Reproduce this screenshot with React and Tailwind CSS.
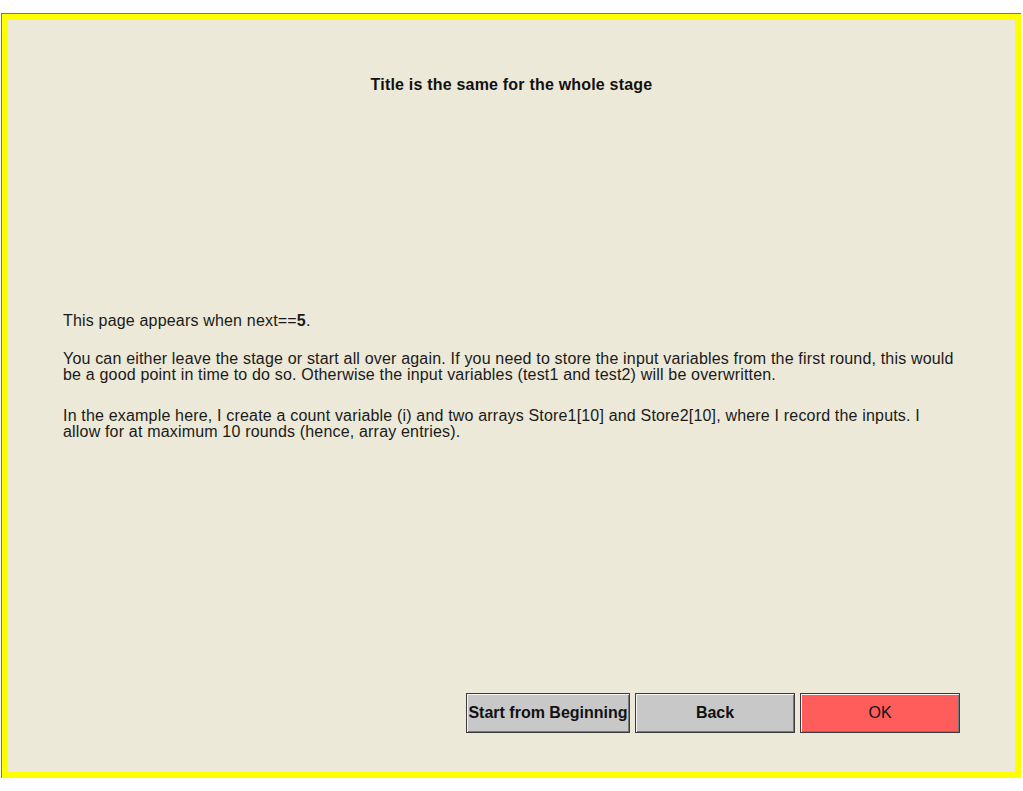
import React from "react";

export default function App() {
  const btn =
    "h-[40px] border border-[#3a3a3a] shadow-[inset_1px_1px_0_#f4f4f4,inset_-1px_-1px_0_#7a7a7a] text-[16px] leading-[16px] text-[#111] flex items-center justify-center whitespace-nowrap";

  return (
    <div className="w-[1023px] h-[791px] bg-white pt-[13px] pl-[1px] font-['Liberation_Sans',Arial,sans-serif]">
      {/* outer frame */}
      <div className="w-[1020px] h-[765px] border-t border-l border-[#7a7868]">
        <div className="w-full h-full border-[6px] border-[#ffff00] bg-[#ece9d8] flex flex-col">
          {/* title */}
          <h1 className="pt-[57px] text-center text-[16px] leading-[16px] tracking-[0.2px] font-bold text-[#111]">
            Title is the same for the whole stage
          </h1>

          {/* body text */}
          <div className="mt-[220px] pl-[55px] pr-[20px] text-[16px] leading-[16px] tracking-[0.18px] text-[#1a1a1a]">
            <p>
              This page appears when next==<b>5</b>.
            </p>
            <p className="mt-[22px]">
              You can either leave the stage or start all over again. If you need to store the input variables from the first round, this would
              <br />
              be a good point in time to do so. Otherwise the input variables (test1 and test2) will be overwritten.
            </p>
            <p className="mt-[25px]">
              In the example here, I create a count variable (i) and two arrays Store1[10] and Store2[10], where I record the inputs. I
              <br />
              allow for at maximum 10 rounds (hence, array entries).
            </p>
          </div>

          {/* buttons */}
          <div className="mt-auto mb-[39px] pr-[55px] flex justify-end gap-[5px]">
            <button className={`${btn} w-[164px] bg-[#c8c8c8] font-bold`}>
              Start from Beginning
            </button>
            <button className={`${btn} w-[160px] bg-[#c8c8c8] font-bold`}>
              Back
            </button>
            <button className={`${btn} w-[160px] bg-[#ff5c5c]`}>
              OK
            </button>
          </div>
        </div>
      </div>
    </div>
  );
}
